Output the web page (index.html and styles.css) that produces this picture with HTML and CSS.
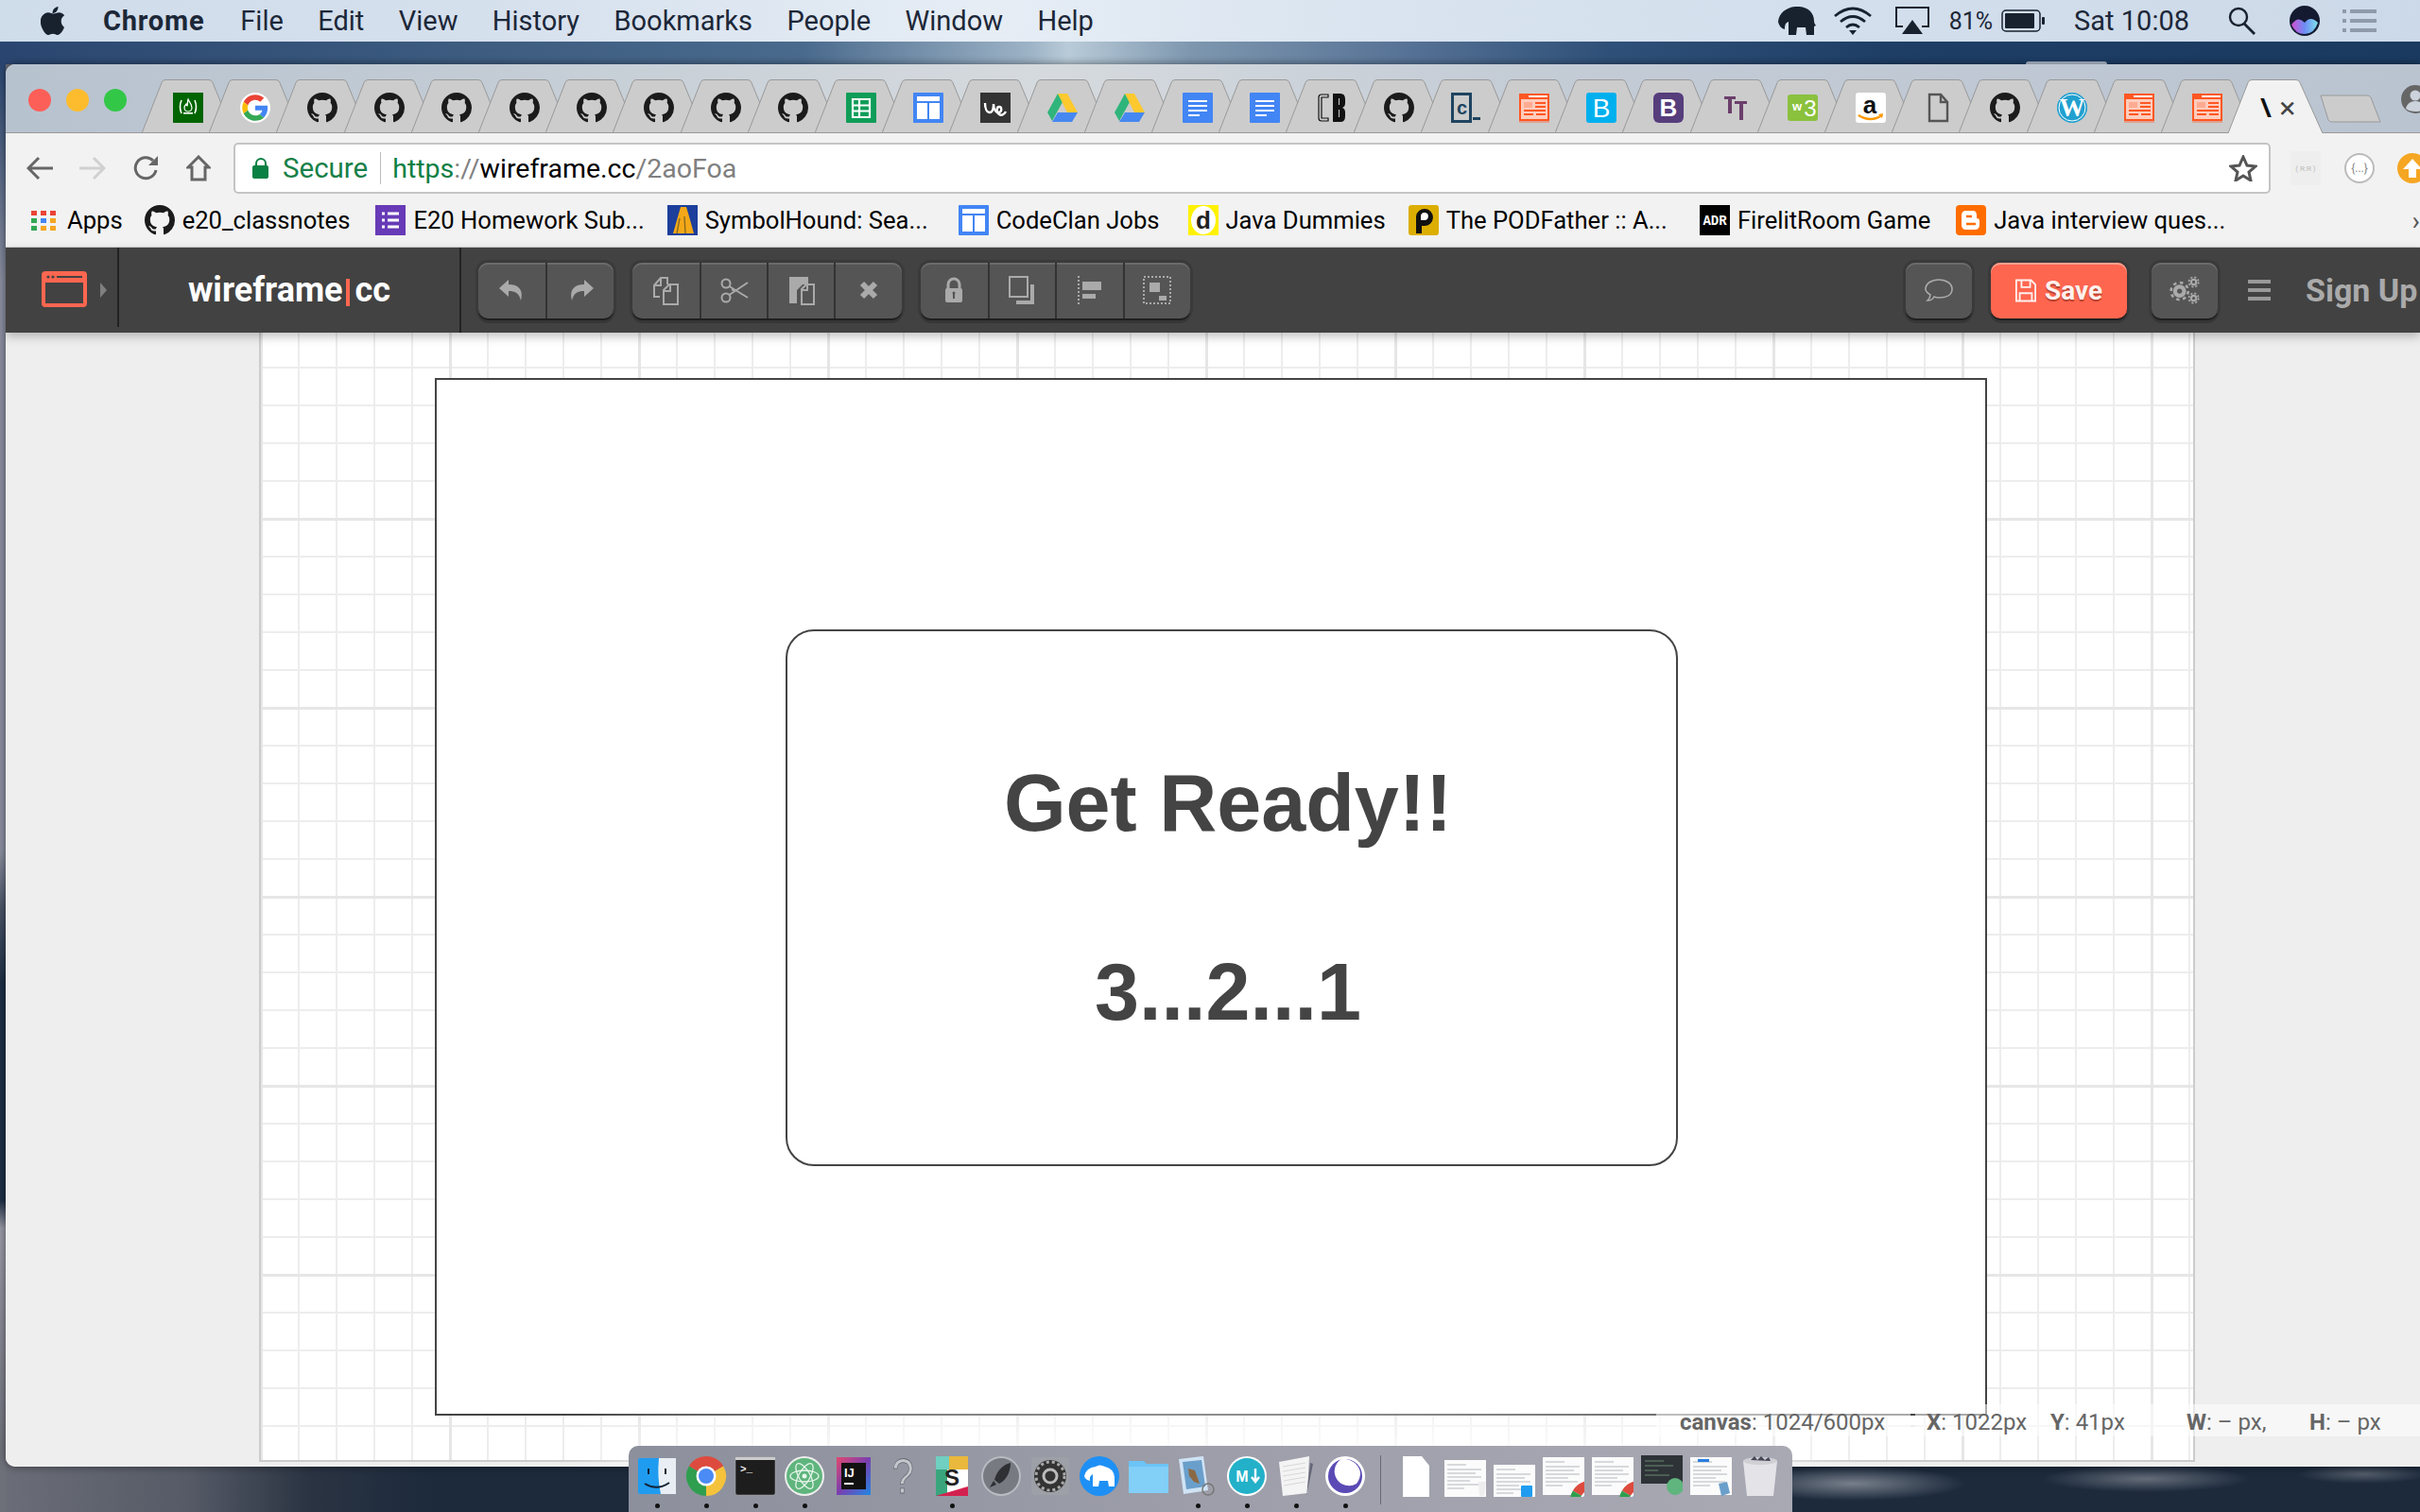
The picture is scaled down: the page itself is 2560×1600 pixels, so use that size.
FILE: index.html
```html
<!DOCTYPE html>
<html lang="en">
<head>
    <meta charset="UTF-8">
    <title>wireframe.cc</title>
    <link rel="stylesheet" href="styles.css">
</head>
<body>
    <!-- shared icons -->
    <svg class="defs">
        <symbol id="gh" viewBox="0 0 16 16"><path fill="#1b1b1b" d="M8 0C3.58 0 0 3.58 0 8c0 3.54 2.29 6.53 5.47 7.59.4.07.55-.17.55-.38 0-.19-.01-.82-.01-1.49-2.01.37-2.53-.49-2.69-.94-.09-.23-.48-.94-.82-1.13-.28-.15-.68-.52-.01-.53.63-.01 1.08.58 1.23.82.72 1.21 1.87.87 2.33.66.07-.52.28-.87.51-1.07-1.78-.2-3.64-.89-3.64-3.95 0-.87.31-1.59.82-2.15-.08-.2-.36-1.02.08-2.12 0 0 .67-.21 2.2.82.64-.18 1.32-.27 2-.27.68 0 1.36.09 2 .27 1.53-1.04 2.2-.82 2.2-.82.44 1.1.16 1.92.08 2.12.51.56.82 1.27.82 2.15 0 3.07-1.87 3.75-3.65 3.95.29.25.54.73.54 1.48 0 1.07-.01 1.93-.01 2.2 0 .21.15.46.55.38A8.013 8.013 0 0016 8c0-4.42-3.58-8-8-8z"/></symbol>
        <symbol id="fcc" viewBox="0 0 32 32"><rect width="32" height="32" fill="#006400"/><path d="M9 8q-3 7 0 14M23 8q3 7 0 14" fill="none" stroke="#fff" stroke-width="1.6"/><path d="M16 7c1 3 4 5 4 9a4 4 0 0 1-8 0c0-2 1-3 2-4 0 1 .5 2 1 2 1-2 0-5 1-7z" fill="none" stroke="#fff" stroke-width="1.2"/><rect x="11" y="21" width="10" height="1.6" fill="#fff"/></symbol>
        <symbol id="google" viewBox="-4 -4 56 56"><circle cx="24" cy="24" r="28" fill="#fff"/><path fill="#EA4335" d="M24 9.5c3.54 0 6.71 1.22 9.21 3.6l6.85-6.85C35.9 2.38 30.47 0 24 0 14.62 0 6.51 5.38 2.56 13.22l7.98 6.19C12.43 13.72 17.74 9.5 24 9.5z"/><path fill="#4285F4" d="M46.98 24.55c0-1.57-.15-3.09-.38-4.55H24v9.02h12.94c-.58 2.96-2.26 5.48-4.78 7.18l7.73 6c4.51-4.18 7.09-10.36 7.09-17.65z"/><path fill="#FBBC05" d="M10.53 28.59c-.48-1.45-.76-2.99-.76-4.59s.27-3.14.76-4.59l-7.98-6.19C.92 16.46 0 20.12 0 24c0 3.88.92 7.54 2.56 10.78l7.97-6.19z"/><path fill="#34A853" d="M24 48c6.48 0 11.93-2.13 15.89-5.81l-7.73-6c-2.15 1.45-4.92 2.3-8.16 2.3-6.26 0-11.57-4.22-13.47-9.91l-7.98 6.19C6.51 42.62 14.62 48 24 48z"/></symbol>
        <symbol id="sheets" viewBox="0 0 32 32"><rect width="32" height="32" rx="1" fill="#0f9d58"/><path d="M7 7h18v19H7zM7 13.5h18M7 19.5h18M14 7v19" fill="none" stroke="#fff" stroke-width="2.2"/></symbol>
        <symbol id="table" viewBox="0 0 32 32"><rect width="32" height="32" rx="1" fill="#4285f4"/><path fill="#fff" d="M4 4h24v5H4zM4 11h11v17H4zM17 11h11v17H17z"/></symbol>
        <symbol id="weebly" viewBox="0 0 32 32"><rect width="32" height="32" fill="#333"/><path d="M5 11c0 6 2 10 5 10s4-5 4-9c0 6 3 10 6 9s3-6 0-6-3 6 0 8 6-1 7-3" fill="none" stroke="#fff" stroke-width="2.4"/></symbol>
        <symbol id="drive" viewBox="0 0 32 32"><path fill="#2fb57b" d="M11 1 0 21l5 9L16 10z"/><path fill="#fdc92f" d="M11 1h10l11 20H21z"/><path fill="#4688f1" d="M5 31h21l6-10H11z"/></symbol>
        <symbol id="docs" viewBox="0 0 32 32"><rect width="32" height="32" rx="1" fill="#4285f4"/><path d="M6 9h20M6 14h20M6 19h20M6 24h12" stroke="#fff" stroke-width="2.2"/></symbol>
        <symbol id="cb" viewBox="0 0 32 32"><path d="M12 2H5Q2 2 2 5v22q0 3 3 3h7v-3H5V5h7z" fill="none" stroke="#111" stroke-width="1.2"/><path fill="#111" d="M17 1h8q5 0 5 6v4q0 4-3 5 3 1 3 5v4q0 6-5 6h-8zm6 5v7h1V6zm0 12v8h1v-8z"/></symbol>
        <symbol id="cprompt" viewBox="0 0 32 32"><rect x="1.5" y="1.5" width="19" height="29" fill="none" stroke="#1f4460" stroke-width="3"/><text x="6" y="23" class="t-fav" font-size="20" fill="#1f4460">c</text><rect x="23" y="26" width="8" height="3" fill="#1f4460"/></symbol>
        <symbol id="orange" viewBox="0 0 32 32"><rect y="1" width="32" height="29" fill="#ff5722"/><rect x="2" y="7" width="28" height="21" fill="#ffccbc"/><path d="M5 10h9v6H5z" fill="#ffab91"/><path d="M17 11h11M17 15h11M5 19h23M5 23h10M18 23h10" stroke="#ff5722" stroke-width="2" fill="none"/><rect y="30" width="32" height="2" fill="#e0a090"/><path d="M10 4h20" stroke="#fff" stroke-width="2"/></symbol>
        <symbol id="bcyan" viewBox="0 0 32 32"><rect width="32" height="32" rx="3" fill="#00b0ee"/><text x="16" y="26" text-anchor="middle" class="t-fav-thin" font-size="28" fill="#fff">B</text></symbol>
        <symbol id="bpurple" viewBox="0 0 32 32"><rect width="32" height="32" rx="6" fill="#563d7c"/><text x="16" y="25" text-anchor="middle" class="t-fav" font-size="26" fill="#fff">B</text></symbol>
        <symbol id="tt" viewBox="0 0 32 32"><path fill="#6b3f6b" d="M4 4h12v3h-4v15H8V7H4zM15 9h13v3h-4v17h-4V12h-5z"/></symbol>
        <symbol id="w3" viewBox="0 0 32 32"><rect y="2" width="32" height="28" rx="3" fill="#8ac13d"/><text x="10" y="19" text-anchor="middle" class="t-fav" font-size="13" fill="#fff">w</text><text x="24" y="25" text-anchor="middle" class="t-fav-thin" font-size="24" fill="#fff">3</text></symbol>
        <symbol id="amazon" viewBox="0 0 32 32"><rect width="32" height="32" rx="3" fill="#fff"/><text x="15" y="22" text-anchor="middle" class="t-fav" font-size="26" fill="#111">a</text><path d="M3 24q13 8 25 0" fill="none" stroke="#f90" stroke-width="2.6"/><path d="M24 23l5-1-1 5z" fill="#f90"/></symbol>
        <symbol id="page" viewBox="0 0 32 32"><path d="M7 2h12l7 8v20H7zM19 2v8h7" fill="none" stroke="#555" stroke-width="2.4"/></symbol>
        <symbol id="wp" viewBox="0 0 32 32"><circle cx="16" cy="16" r="16" fill="#21a0cf"/><circle cx="16" cy="16" r="14" fill="none" stroke="#fff" stroke-width="1"/><text x="16" y="25" text-anchor="middle" class="t-serif" font-size="27" fill="#fff">W</text></symbol>
        <symbol id="form" viewBox="0 0 32 32"><rect width="32" height="32" fill="#673ab7"/><path d="M7 9h3M13 9h12M7 16h3M13 16h12M7 23h3M13 23h12" stroke="#fff" stroke-width="3.2"/></symbol>
        <symbol id="hound" viewBox="0 0 32 32"><rect width="32" height="32" fill="#1c3f9c"/><path fill="#f4a817" d="M14 2h6l3 10 5 18H6l4-14z"/><path d="M13 14l-3 16M18 12l1 18" stroke="#8a6a20" stroke-width="1.4"/></symbol>
        <symbol id="dummy" viewBox="0 0 32 32"><rect width="32" height="32" fill="#fff200"/><ellipse cx="16" cy="16" rx="13" ry="15" fill="#fff"/><text x="16" y="25" text-anchor="middle" class="t-fav" font-size="26" fill="#222">d</text></symbol>
        <symbol id="pod" viewBox="0 0 32 32"><rect width="32" height="32" rx="3" fill="#dcae00"/><path d="M8 30V12a9 9 0 1 1 9 10h-3v8z" fill="#111"/><path d="M13 16v-5a4 4 0 1 1 4 5z" fill="#fff"/></symbol>
        <symbol id="adr" viewBox="0 0 32 32"><rect width="32" height="32" fill="#000"/><text x="16" y="21" text-anchor="middle" class="t-mono" font-size="14" fill="#fff">ADR</text></symbol>
        <symbol id="blogger" viewBox="0 0 32 32"><rect width="32" height="32" rx="4" fill="#ff6d00"/><path d="M11 6h7q4 0 4 5v3q3 0 3 3v4q0 5-5 5h-9q-5 0-5-5V11q0-5 5-5z" fill="#fff"/><path d="M11 12h6M11 20h10" stroke="#ff6d00" stroke-width="2.4"/></symbol>
        <symbol id="chrome" viewBox="0 0 44 44"><path fill="#dd4b3e" d="M22 22 3.8 11.5A21 21 0 0 1 40.2 11.5z"/><path fill="#f5c33b" d="M22 22 40.2 11.5A21 21 0 0 1 22 43z"/><path fill="#2f9e4f" d="M22 22 22 43A21 21 0 0 1 3.8 11.5z"/><circle cx="22" cy="22" r="10.5" fill="#fff"/><circle cx="22" cy="22" r="8" fill="#4a8bf5"/></symbol>
        <symbol id="thumb" viewBox="0 0 44 40"><rect width="44" height="40" fill="#fbfbfb"/><path d="M3 5h20M3 10h36M3 14h30M3 18h36M3 22h24M3 26h34M3 30h18" stroke="#b4b8be" stroke-width="1.2"/></symbol>
    </svg>

    <!-- mac menu bar -->
    <header class="menubar">
        <svg class="apple" viewBox="0 0 26 30"><path fill="#18222f" d="M18.5 0c.2 2-.6 3.700-1.600 5-1 1.200-2.700 2.200-4.300 2-.2-1.800.7-3.600 1.600-4.700C15.300 1 17.100.1 18.500 0zM25 22c-.8 1.700-1.100 2.400-2.100 3.900-1.400 2.100-3.300 4-5.300 4-1.800 0-2.300-1.200-4.600-1.200s-3 1.200-4.800 1.200c-2 0-3.600-1.900-5-4C-.7 20.200-1.100 13.500 1.500 10 3.200 7.500 5.700 6.200 8 6.200c2.400 0 3.900 1.300 5.800 1.300 1.900 0 3-1.300 5.700-1.300 2.100 0 4.200 1.100 5.700 3-5 2.800-4.200 9.900-.2 12.800z"/></svg>
        <nav class="menu-items">
            <span class="menu-app">Chrome</span>
            <span>File</span>
            <span>Edit</span>
            <span>View</span>
            <span>History</span>
            <span>Bookmarks</span>
            <span>People</span>
            <span>Window</span>
            <span>Help</span>
        </nav>
        <div class="menu-status">
            <svg class="st-elephant" viewBox="0 0 40 30"><path fill="#18222f" d="M0 16C1 7 8 1 18 0c11-1 20 5 20 15 0 2 1 4 2 5l-2 1v9h-8l-1-8H20l-1 8h-8V16c-3 1-4 3-4 8-4-1-6-4-7-8z"/></svg>
            <svg class="st-wifi" viewBox="0 0 42 32"><path d="M2 11q19-16 38 0M8 17q13-11 26 0M14 23q7-6 14 0" fill="none" stroke="#18222f" stroke-width="2.800"/><path d="M17 26h8l-4 5z" fill="#18222f"/></svg>
            <svg class="st-airplay" viewBox="0 0 36 30"><path d="M8 21H1V1h34v20h-7" fill="none" stroke="#18222f" stroke-width="2"/><path d="M18 14l11 15H7z" fill="#18222f"/></svg>
            <span class="st-batt-text">81%</span>
            <svg class="st-battery" viewBox="0 0 46 24"><rect x="1" y="1" width="40" height="22" rx="4" fill="none" stroke="#18222f" stroke-width="1.500"/><rect x="4" y="4" width="31" height="16" rx="1" fill="#18222f"/><rect x="43" y="8" width="3" height="8" rx="1" fill="#18222f"/></svg>
            <span class="st-clock">Sat 10:08</span>
            <svg class="st-search" viewBox="0 0 30 30"><circle cx="11" cy="11" r="9" fill="none" stroke="#18222f" stroke-width="2.400"/><path d="M17 18l11 11" stroke="#18222f" stroke-width="2.800"/></svg>
            <svg class="st-siri" viewBox="0 0 32 32"><defs><linearGradient id="siri-g" x1="0" x2="1"><stop offset="0" stop-color="#d14fd0"/><stop offset=".5" stop-color="#6d8cf5"/><stop offset="1" stop-color="#7fe0ea"/></linearGradient></defs><circle cx="16" cy="16" r="16" fill="#141a30"/><path d="M2 20q7-10 14-2 6-8 14 0-4 12-14 12T2 20z" fill="url(#siri-g)"/></svg>
            <svg class="st-list" viewBox="0 0 36 26"><path d="M0 3h4M8 3h28M0 13h4M8 13h28M0 23h4M8 23h28" stroke="#8f9bab" stroke-width="4"/></svg>
        </div>
    </header>

    <div class="window-behind"></div>

    <main class="window">
        <!-- tab strip -->
        <div class="tabstrip">
            <div class="traffic">
                <span class="light light-red"></span>
                <span class="light light-yellow"></span>
                <span class="light light-green"></span>
            </div>
            <div class="tabs">
                <div class="tab tab-active"><span class="tab-title">\</span><span class="tab-close">×</span></div>
                <div class="tab"><svg class="fav"><use href="#orange"/></svg></div>
                <div class="tab"><svg class="fav"><use href="#orange"/></svg></div>
                <div class="tab"><svg class="fav"><use href="#wp"/></svg></div>
                <div class="tab"><svg class="fav"><use href="#gh"/></svg></div>
                <div class="tab"><svg class="fav"><use href="#page"/></svg></div>
                <div class="tab"><svg class="fav"><use href="#amazon"/></svg></div>
                <div class="tab"><svg class="fav"><use href="#w3"/></svg></div>
                <div class="tab"><svg class="fav"><use href="#tt"/></svg></div>
                <div class="tab"><svg class="fav"><use href="#bpurple"/></svg></div>
                <div class="tab"><svg class="fav"><use href="#bcyan"/></svg></div>
                <div class="tab"><svg class="fav"><use href="#orange"/></svg></div>
                <div class="tab"><svg class="fav"><use href="#cprompt"/></svg></div>
                <div class="tab"><svg class="fav"><use href="#gh"/></svg></div>
                <div class="tab"><svg class="fav"><use href="#cb"/></svg></div>
                <div class="tab"><svg class="fav"><use href="#docs"/></svg></div>
                <div class="tab"><svg class="fav"><use href="#docs"/></svg></div>
                <div class="tab"><svg class="fav"><use href="#drive"/></svg></div>
                <div class="tab"><svg class="fav"><use href="#drive"/></svg></div>
                <div class="tab"><svg class="fav"><use href="#weebly"/></svg></div>
                <div class="tab"><svg class="fav"><use href="#table"/></svg></div>
                <div class="tab"><svg class="fav"><use href="#sheets"/></svg></div>
                <div class="tab"><svg class="fav"><use href="#gh"/></svg></div>
                <div class="tab"><svg class="fav"><use href="#gh"/></svg></div>
                <div class="tab"><svg class="fav"><use href="#gh"/></svg></div>
                <div class="tab"><svg class="fav"><use href="#gh"/></svg></div>
                <div class="tab"><svg class="fav"><use href="#gh"/></svg></div>
                <div class="tab"><svg class="fav"><use href="#gh"/></svg></div>
                <div class="tab"><svg class="fav"><use href="#gh"/></svg></div>
                <div class="tab"><svg class="fav"><use href="#gh"/></svg></div>
                <div class="tab"><svg class="fav"><use href="#google"/></svg></div>
                <div class="tab"><svg class="fav"><use href="#fcc"/></svg></div>
            </div>
            <div class="newtab"></div>
            <svg class="profile" viewBox="0 0 30 30"><circle cx="15" cy="15" r="15" fill="#666"/><circle cx="15" cy="11" r="5.500" fill="#ccd3dc"/><path d="M5 25q2-8 10-8t10 8q-4 3-10 3t-10-3z" fill="#ccd3dc"/></svg>
        </div>

        <!-- address row -->
        <div class="addressbar">
            <svg class="nav-icon nav-back" viewBox="0 0 28 26"><path d="M13 2 2 13l11 11M2 13h26" fill="none" stroke="#666" stroke-width="3"/></svg>
            <svg class="nav-icon nav-forward" viewBox="0 0 28 26"><path d="M15 2l11 11-11 11M26 13H0" fill="none" stroke="#d0d0d0" stroke-width="3"/></svg>
            <svg class="nav-icon nav-reload" viewBox="0 0 28 28"><path d="M24 16a11 11 0 1 1-3-10" fill="none" stroke="#666" stroke-width="3"/><path d="M26 1v10H16z" fill="#666"/></svg>
            <svg class="nav-icon nav-home" viewBox="0 0 26 28"><path d="M13 2 2 13h4v13h14V13h4z" fill="none" stroke="#666" stroke-width="3"/></svg>
            <div class="omnibox">
                <svg class="lock" viewBox="0 0 18 22"><path d="M4 9V6a5 5 0 0 1 10 0v3" fill="none" stroke="#0b8043" stroke-width="2"/><rect y="8" width="17" height="14" rx="2" fill="#0b8043"/></svg>
                <span class="secure">Secure</span>
                <span class="url"><span class="url-https">https</span><span class="url-dim">://</span><span class="url-host">wireframe.cc</span><span class="url-dim">/2aoFoa</span></span>
                <svg class="star" viewBox="0 0 30 28"><path d="M15 2l4 9 9 1-7 6 2 9-8-5-8 5 2-9-7-6 9-1z" fill="none" stroke="#555" stroke-width="3"/></svg>
            </div>
            <div class="extensions">
                <span class="ext-rr">( R:R )</span>
                <span class="ext-json">{...}</span>
                <svg class="ext-up" viewBox="0 0 32 32"><circle cx="16" cy="16" r="16" fill="#f5a623"/><path d="M16 6l10 11h-6v9h-8v-9H6z" fill="#fff"/></svg>
            </div>
        </div>

        <!-- bookmarks -->
        <div class="bookmarks">
            <a class="bookmark bm-apps"><svg class="bm-icon bm-grid" viewBox="0 0 27 21"><path fill="#ea4335" d="M0 0h6v5H0zM10 0h6v5h-6zM20 0h6v5h-6z"/><path fill="#34a853" d="M0 8h6v5H0z"/><path fill="#4285f4" d="M10 8h6v5h-6z"/><path fill="#f5a623" d="M20 8h6v5h-6zM10 16h6v5h-6zM20 16h6v5h-6z"/><path fill="#34a853" d="M0 16h6v5H0z"/></svg>Apps</a>
            <a class="bookmark"><svg class="bm-icon"><use href="#gh"/></svg>e20_classnotes</a>
            <a class="bookmark"><svg class="bm-icon"><use href="#form"/></svg>E20 Homework Sub...</a>
            <a class="bookmark"><svg class="bm-icon"><use href="#hound"/></svg>SymbolHound: Sea...</a>
            <a class="bookmark"><svg class="bm-icon"><use href="#table"/></svg>CodeClan Jobs</a>
            <a class="bookmark"><svg class="bm-icon"><use href="#dummy"/></svg>Java Dummies</a>
            <a class="bookmark"><svg class="bm-icon"><use href="#pod"/></svg>The PODFather :: A...</a>
            <a class="bookmark"><svg class="bm-icon"><use href="#adr"/></svg>FirelitRoom Game</a>
            <a class="bookmark"><svg class="bm-icon"><use href="#blogger"/></svg>Java interview ques...</a>
            <span class="bm-more">›</span>
        </div>

        <!-- wireframe.cc toolbar -->
        <div class="toolbar">
            <div class="tb-logo">
                <svg class="logo-icon" viewBox="0 0 48 38"><rect x="2" y="2" width="44" height="34" rx="2" fill="none" stroke="#ff6650" stroke-width="4"/><path fill="#ff6650" d="M2 2h44v10H2z"/><circle cx="7" cy="6" r="1.600" fill="#424242"/><circle cx="12" cy="6" r="1.600" fill="#424242"/><rect x="16" y="5" width="27" height="2" fill="#424242"/></svg>
                <span class="logo-caret"></span>
            </div>
            <div class="tb-brand">wireframe<span class="brand-bar"></span>cc</div>
            <div class="btn-group btn-group-history">
                <button class="btn"><svg viewBox="0 0 32 32"><path d="M12 5 2 14l10 9v-6c7 0 11 2 13 10 3-11-2-17-13-17z" fill="#aaa"/></svg></button>
                <button class="btn"><svg viewBox="0 0 32 32"><path d="M20 5l10 9-10 9v-6c-7 0-11 2-13 10-3-11 2-17 13-17z" fill="#aaa"/></svg></button>
            </div>
            <div class="btn-group">
                <button class="btn"><svg viewBox="0 0 32 32"><path d="M10 23H4V11l7-8h7v7M5 11h6V3" fill="none" stroke="#aaa" stroke-width="2"/><path d="M14 31V16l6-6h9v21zM14 17h7v-7" fill="#555" stroke="#aaa" stroke-width="2"/></svg></button>
                <button class="btn"><svg viewBox="0 0 32 32"><g fill="none" stroke="#aaa" stroke-width="2"><circle cx="7" cy="9" r="4.500"/><circle cx="7" cy="24" r="4.500"/><path d="M10.500 12 30 24M10.500 21 30 8M13 15l4 2"/></g></svg></button>
                <button class="btn"><svg viewBox="0 0 32 32"><path d="M3 2h20v8h-6l-6 6v14H3z" fill="#aaa"/><path d="M16 31V15l5-5h8v21zM16 16h6v-6" fill="#555" stroke="#aaa" stroke-width="2"/></svg></button>
                <button class="btn"><svg viewBox="0 0 32 32"><path d="M9 9l14 14M23 9 9 23" stroke="#aaa" stroke-width="6"/></svg></button>
            </div>
            <div class="btn-group">
                <button class="btn"><svg viewBox="0 0 32 32"><path d="M10 15V10a6 6 0 0 1 12 0v5" fill="none" stroke="#aaa" stroke-width="3"/><rect x="7" y="14" width="18" height="15" rx="2" fill="#aaa"/><path d="M16 18v7" stroke="#555" stroke-width="2"/><circle cx="16" cy="19" r="1.500" fill="#555"/></svg></button>
                <button class="btn"><svg viewBox="0 0 32 32"><rect x="2" y="2" width="19" height="21" fill="none" stroke="#aaa" stroke-width="2"/><path fill="#aaa" d="M24 10h4v21H9v-4h15z"/></svg></button>
                <button class="btn"><svg viewBox="0 0 32 32"><path d="M4 1v30" stroke="#aaa" stroke-width="2" stroke-dasharray="2 2"/><path fill="#aaa" d="M8 7h20v9H8zM8 20h14v5H8z"/></svg></button>
                <button class="btn"><svg viewBox="0 0 32 32"><rect x="2" y="2" width="28" height="28" fill="none" stroke="#aaa" stroke-width="2" stroke-dasharray="2 2"/><path fill="#aaa" d="M8 8h11v10H8zM18 22h8v5h-8z"/></svg></button>
            </div>
            <div class="tb-right">
                <button class="btn btn-single"><svg viewBox="0 0 32 32"><path d="M16 5c8 0 14 4 14 10s-6 9-14 9c-2 0-3 0-5-1-1 2-4 4-7 4 2-2 3-4 3-6-3-2-5-4-5-6C2 9 8 5 16 5z" fill="none" stroke="#aaa" stroke-width="1.600"/></svg></button>
                <button class="btn btn-save"><svg viewBox="0 0 24 26"><path d="M1 1h17l5 5v19H1zM7 1v8h10V1M5 25v-9h14v9" fill="none" stroke="#fff1ee" stroke-width="2"/></svg>Save</button>
                <button class="btn btn-single"><svg viewBox="0 0 30 28"><g fill="none" stroke="#aaa"><circle cx="10" cy="15" r="4.500" stroke-width="4"/><circle cx="10" cy="15" r="8.500" stroke-width="2.400" stroke-dasharray="3.300 3.370"/><circle cx="24" cy="6" r="2.500" stroke-width="2"/><circle cx="24" cy="6" r="4.800" stroke-width="1.600" stroke-dasharray="2 1.770"/><circle cx="24" cy="22" r="2.500" stroke-width="2"/><circle cx="24" cy="22" r="4.800" stroke-width="1.600" stroke-dasharray="2 1.770"/></g></svg></button>
                <div class="hamburger"><span></span><span></span><span></span></div>
                <span class="signup">Sign Up</span>
            </div>
        </div>

        <!-- drawing area -->
        <div class="workspace">
            <div class="gridsheet">
                <div class="artboard">
                    <div class="rounded-box">
                        <div class="box-line">Get Ready!!</div>
                        <div class="box-line">3...2...1</div>
                    </div>
                </div>
            </div>
            <div class="dock-glow"></div>
        </div>
    </main>

    <!-- coordinates readout, floats over the page -->
    <div class="statusbar">
        <div class="status-part status-canvas"><b>canvas</b>: 1024/600px</div>
        <div class="status-part status-coords">
            <span class="st-x"><b>X</b>: 1022px</span>
            <span class="st-y"><b>Y</b>: 41px</span>
            <span class="st-w"><b>W</b>: – px,</span>
            <span class="st-h"><b>H</b>: – px</span>
        </div>
    </div>

    <!-- dock -->
    <footer class="dock">
        <div class="dock-item on"><svg viewBox="0 0 44 44"><rect x="2" y="3" width="40" height="38" rx="2" fill="#1f9cf0"/><path d="M24 3h18v38H26q-4-18-2-38z" fill="#e8eef4"/><path d="M13 14v6M31 14v6M9 30q13 8 26-1" fill="none" stroke="#123" stroke-width="2"/></svg></div>
        <div class="dock-item on"><svg viewBox="0 0 44 44"><use href="#chrome"/></svg></div>
        <div class="dock-item on"><svg viewBox="0 0 44 44"><rect x="1" y="2" width="42" height="40" rx="2" fill="#1d1d1d" stroke="#aaa" stroke-width=".5"/><rect x="1" y="2" width="42" height="3" fill="#ccc"/><text x="6" y="18" class="t-mono" font-size="11" fill="#eee">&gt;_</text></svg></div>
        <div class="dock-item on"><svg viewBox="0 0 44 44"><circle cx="22" cy="22" r="21" fill="#eee"/><circle cx="22" cy="22" r="19" fill="#5fb57d"/><g fill="none" stroke="#e8f6ec" stroke-width="1.300"><ellipse cx="22" cy="22" rx="15" ry="6"/><ellipse cx="22" cy="22" rx="15" ry="6" transform="rotate(60 22 22)"/><ellipse cx="22" cy="22" rx="15" ry="6" transform="rotate(120 22 22)"/></g><circle cx="22" cy="22" r="2.500" fill="#e8f6ec"/></svg></div>
        <div class="dock-item"><svg viewBox="0 0 44 44"><defs><linearGradient id="ij-g" x1="0" y1="0" x2="1" y2="1"><stop offset="0" stop-color="#e3486e"/><stop offset=".5" stop-color="#7a3fb0"/><stop offset="1" stop-color="#1e88e5"/></linearGradient></defs><rect x="4" y="2" width="36" height="40" fill="url(#ij-g)"/><rect x="9" y="8" width="26" height="28" fill="#111"/><text x="12" y="23" class="t-fav" font-size="13" fill="#fff">IJ</text><rect x="12" y="29" width="10" height="2" fill="#fff"/></svg></div>
        <div class="dock-item dock-help">?</div>
        <div class="dock-item on"><svg viewBox="0 0 44 44"><path d="M5 1h34v42H5z" fill="#fff"/><path d="M5 1h14v14H5z" fill="#6fcfc0"/><path d="M19 1h20v14H19z" fill="#eab83c"/><path d="M5 15h12v28H5z" fill="#3aa57d"/><path d="M5 43l34-10v10z" fill="#d3214f"/><text x="22" y="32" text-anchor="middle" class="t-fav" font-size="24" fill="#222">S</text></svg></div>
        <div class="dock-item"><svg viewBox="0 0 44 44"><circle cx="22" cy="22" r="21" fill="#b9bcc2"/><circle cx="22" cy="22" r="19" fill="#777a80"/><path d="M32 8c-9 2-15 10-17 18l5 4c7-3 12-12 12-22zM14 27l-4 7 7-3z" fill="#2e3034"/></svg></div>
        <div class="dock-item"><svg viewBox="0 0 44 44"><rect x="2" y="2" width="40" height="40" rx="3" fill="#9da0a6"/><circle cx="22" cy="22" r="17" fill="#333"/><circle cx="22" cy="22" r="15" fill="none" stroke="#aaa" stroke-width="3" stroke-dasharray="3 3"/><circle cx="22" cy="22" r="7" fill="none" stroke="#bbb" stroke-width="3"/></svg></div>
        <div class="dock-item"><svg viewBox="0 0 44 44"><circle cx="22" cy="22" r="21" fill="#1e90f5"/><path d="M6 22q2-9 12-10 4-3 10 0 9 2 10 11v10h-6l-1-6h-9l-1 6h-6V20q-4 2-3 7-5-1-6-5z" fill="#fff"/></svg></div>
        <div class="dock-item"><svg viewBox="0 0 44 44"><path d="M1 6h16l3 3h23v31H1z" fill="#6cc3f5"/><rect x="1" y="12" width="42" height="28" fill="#82cff8"/></svg></div>
        <div class="dock-item on"><svg viewBox="0 0 44 44"><path d="M2 4 28 1l5 36-26 4z" fill="#cfe3f5"/><path d="M6 7 26 5l4 28-20 3z" fill="#6a9fcb"/><path d="M12 14l7 2 5 14-6-2-5-6z" fill="#8a6a44"/><circle cx="33" cy="36" r="6" fill="none" stroke="#777" stroke-width="1.500"/></svg></div>
        <div class="dock-item on"><svg viewBox="0 0 44 44"><circle cx="22" cy="22" r="21" fill="#fff"/><circle cx="22" cy="22" r="19" fill="#23b0c9"/><text x="17" y="28" text-anchor="middle" class="t-fav" font-size="16" fill="#fff">M</text><path d="M31 14v13M27 23l4 5 4-5" fill="none" stroke="#fff" stroke-width="2.400"/></svg></div>
        <div class="dock-item on"><svg viewBox="0 0 44 44"><path d="M4 7 36 1l-2 39-26 3z" fill="#f4f4f4"/><path d="M8 12l24-4M8 17l24-4M8 22l24-4M9 27l23-4M9 32l23-4" stroke="#d8d8d8"/><path d="M37 8l3 1-7 34z" fill="#667"/></svg></div>
        <div class="dock-item on"><svg viewBox="0 0 44 44"><circle cx="22" cy="22" r="21" fill="#fff"/><circle cx="22" cy="22" r="18" fill="#5a4ab5"/><path d="M18 4a15 15 0 0 0 16 26 18 18 0 0 0 4-12 18 18 0 0 0-20-14z" fill="#fff"/></svg></div>
        <span class="dock-sep"></span>
        <div class="dock-item"><svg viewBox="0 0 44 44"><path d="M8 1h20l8 10v33H8z" fill="#fff"/></svg></div>
        <div class="dock-item"><svg viewBox="0 0 44 44"><svg width="44" height="36" y="3" viewBox="0 0 44 40"><use href="#thumb"/></svg><path d="M36 28h8l-2 15h-5z" fill="#eee"/></svg></div>
        <div class="dock-item"><svg viewBox="0 0 44 44"><svg width="44" height="30" y="8" viewBox="0 0 44 40"><use href="#thumb"/></svg><rect x="29" y="32" width="12" height="12" rx="1" fill="#1f9cf0"/></svg></div>
        <div class="dock-item"><svg viewBox="0 0 44 44"><svg width="44" height="32" y="0" viewBox="0 0 44 40"><use href="#thumb"/></svg><svg x="28" y="26" width="18" height="18" viewBox="0 0 44 44"><use href="#chrome"/></svg></svg></div>
        <div class="dock-item"><svg viewBox="0 0 44 44"><svg width="44" height="32" y="0" viewBox="0 0 44 40"><use href="#thumb"/></svg><svg x="28" y="26" width="18" height="18" viewBox="0 0 44 44"><use href="#chrome"/></svg></svg></div>
        <div class="dock-item"><svg viewBox="0 0 44 44"><rect y="0" width="44" height="30" fill="#2e3338"/><path d="M4 6h20M4 11h30M4 16h14M4 21h26" stroke="#6a8a70"/><circle cx="36" cy="33" r="9" fill="#5fb57d"/></svg></div>
        <div class="dock-item"><svg viewBox="0 0 44 44"><svg width="44" height="32" y="0" viewBox="0 0 44 40"><use href="#thumb"/></svg><rect x="8" y="4" width="12" height="3" fill="#2a7de1"/><path d="M30 30l9-2 3 12-9 3z" fill="#6a9fcb"/></svg></div>
        <div class="dock-item"><svg viewBox="0 0 44 44"><path d="M4 6h36l-4 37H8z" fill="#e4e4e8"/><ellipse cx="22" cy="6" rx="18" ry="4" fill="#cfcfd4"/><path d="M12 5l4-4 3 4 4-4 4 4 4-3 2 4z" fill="#445"/></svg></div>
    </footer>
</body>
</html>
```

FILE: styles.css
```css
* {
    margin: 0;
    padding: 0;
    box-sizing: border-box;
}

body {
    position: relative;
    width: 2560px;
    height: 1600px;
    overflow: hidden;
    font-family: Roboto, "Liberation Sans", sans-serif;
    background:
        radial-gradient(ellipse 120px 18px at 1960px 1570px, rgba(150, 155, 165, .75), transparent),
        radial-gradient(ellipse 110px 14px at 2270px 1565px, rgba(130, 135, 145, .7), transparent),
        radial-gradient(ellipse 70px 10px at 2500px 1560px, rgba(120, 125, 135, .6), transparent),
        linear-gradient(90deg, #2a4670 0, #3d5c80 500px, #4a6a8d 850px, #9db3c6 1090px, #b9cbd8 1130px, #7e97af 1260px, #547094 1500px, #2f5078 1700px, #1e3e66 2000px, #1a3a60 2560px) top / 100% 68px no-repeat,
        linear-gradient(180deg, #2a4670 68px, #8b8fa0 300px, #8b8fa0 900px, #4a5568 960px, #1e2f46 1040px, #1e2f46 1270px, #9a9aa8 1300px, #6e7079 1552px) left / 6px 100% no-repeat,
        linear-gradient(90deg, #6b6e78 0, #555a66 200px, #2a3342 330px, #1c2a3c 460px, #1c2a3c 2560px);
}

.defs {
    display: none;
}

.t-fav { font-family: "Liberation Sans", sans-serif; font-weight: 700; }
.t-fav-thin { font-family: "Liberation Sans", sans-serif; }
.t-serif { font-family: "Liberation Serif", serif; font-weight: 700; }
.t-mono { font-family: "Liberation Mono", monospace; font-weight: 700; }

/* mac menu bar */
.menubar {
    display: flex;
    align-items: center;
    height: 44px;
    padding-left: 43px;
    font-size: 29px;
    color: #1c2738;
    background: linear-gradient(90deg, #cfdcea 0, #d5e0ed 500px, #e6edf5 1050px, #d8e3ef 1500px, #ccd9e8 2560px);
}

.apple {
    width: 26px;
    height: 30px;
}

.menu-items {
    display: flex;
    gap: 36.400px;
    margin-left: 40px;
}

.menu-app {
    margin-right: 1.600px;
    font-weight: 700;
    letter-spacing: .8px;
}

.menu-status {
    display: flex;
    align-items: center;
    margin-left: auto;
    padding-right: 46px;
}

.st-elephant { width: 40px; height: 30px; }
.st-wifi { width: 42px; height: 32px; margin-left: 18px; }
.st-airplay { width: 36px; height: 30px; margin-left: 24px; }
.st-batt-text { font-size: 25px; margin-left: 21px; }
.st-battery { width: 46px; height: 24px; margin-left: 9px; }
.st-clock { margin-left: 31px; }
.st-search { width: 30px; height: 30px; margin-left: 41px; }
.st-siri { width: 32px; height: 32px; margin-left: 35px; }
.st-list { width: 36px; height: 26px; margin-left: 24px; }

.window-behind {
    position: absolute;
    top: 65px;
    left: 2143px;
    width: 86px;
    height: 3px;
    border-radius: 3px 3px 0 0;
    background: #8f9aa8;
}

/* browser window */
.window {
    display: flex;
    flex-direction: column;
    width: 2554px;
    height: 1484px;
    margin: 24px 0 0 6px;
    border-radius: 10px 0 0 10px;
    overflow: hidden;
    background: #f2f2f2;
    box-shadow: 0 0 8px rgba(0, 0, 0, .5);
}

.tabstrip {
    display: flex;
    align-items: flex-end;
    flex: none;
    height: 73px;
    border-bottom: 1px solid #9a9a9a;
    background: linear-gradient(90deg, #b7c2cf 0, #c3ccd5 500px, #d5dade 1100px, #c4ccd6 1600px, #bac4d1 2554px);
}

.traffic {
    display: flex;
    flex: none;
    gap: 16px;
    align-self: flex-start;
    width: 144px;
    padding: 26px 0 0 24px;
}

.light {
    width: 24px;
    height: 24px;
    border-radius: 50%;
}

.light-red { background: #fc5f57; }
.light-yellow { background: #fdbc2e; }
.light-green { background: #33c748; }

.tabs {
    display: flex;
    flex-direction: row-reverse;
    justify-content: flex-end;
    flex: none;
    margin-bottom: -1px;
}

.tab {
    display: flex;
    align-items: center;
    justify-content: center;
    flex: none;
    width: 97px;
    height: 57px;
    padding-top: 3px;
    background: url("data:image/svg+xml,%3Csvg xmlns='http://www.w3.org/2000/svg' width='97' height='57'%3E%3Cpath d='M0 57 21 3.500Q22 .5 25 .5H71Q74 .5 75 3.500L97 57' fill='%23ccc' stroke='%23999'/%3E%3Cpath d='M0 56.500H97' stroke='%23999'/%3E%3C/svg%3E") no-repeat;
}

.tab + .tab {
    margin-right: -25.800px;
}

.tab-active {
    position: relative;
    z-index: 2;
    width: 100px;
    gap: 9px;
    padding-left: 5px;
    color: #333;
    background: url("data:image/svg+xml,%3Csvg xmlns='http://www.w3.org/2000/svg' width='100' height='57'%3E%3Cpath d='M0 57 21 3.500Q22 .5 25 .5H72Q75 .5 76 3.500L100 57' fill='%23f2f2f2' stroke='%23999'/%3E%3C/svg%3E") no-repeat;
}

.tab-title {
    font-size: 26px;
    font-weight: 700;
    color: #111;
}

.tab-close {
    font-size: 32px;
    color: #444;
}

.fav {
    width: 32px;
    height: 32px;
}

.newtab {
    flex: none;
    width: 65px;
    height: 30px;
    margin: 0 0 10px -3px;
    background: url("data:image/svg+xml,%3Csvg xmlns='http://www.w3.org/2000/svg' width='65' height='30'%3E%3Cpath d='M1 1H50Q53 1 54 3L64 29H13Q10 29 9 27z' fill='%23ccc' stroke='%23999'/%3E%3C/svg%3E") no-repeat;
}

.profile {
    flex: none;
    width: 30px;
    height: 30px;
    margin: 0 0 20px 21px;
}

.addressbar {
    display: flex;
    align-items: center;
    flex: none;
    height: 64px;
    padding: 10px 0 0 22px;
    background: #f2f2f2;
}

.nav-icon {
    flex: none;
}

.nav-back { width: 28px; height: 26px; }
.nav-forward { width: 28px; height: 26px; margin-left: 28px; }
.nav-reload { width: 28px; height: 28px; margin-left: 29px; }
.nav-home { width: 26px; height: 28px; margin-left: 28px; }

.omnibox {
    display: flex;
    align-items: center;
    flex: none;
    width: 2155px;
    height: 54px;
    margin-left: 24px;
    padding: 0 12px 0 18px;
    border: 2px solid #c4c4c4;
    border-radius: 5px;
    background: #fff;
    font-size: 28.500px;
}

.lock {
    width: 18px;
    height: 22px;
}

.secure {
    padding: 0 13px 0 14px;
    border-right: 1px solid #bbb;
    font-size: 29.500px;
    line-height: 34px;
    color: #188048;
}

.url {
    margin-left: 12px;
    color: #000;
}

.url-https { color: #0b8043; }
.url-dim { color: #808080; }

.star {
    width: 30px;
    height: 28px;
    margin-left: auto;
}

.extensions {
    display: flex;
    align-items: center;
    flex: none;
    margin-left: 21px;
}

.ext-rr {
    display: flex;
    align-items: center;
    justify-content: center;
    width: 32px;
    height: 36px;
    font-size: 8px;
    text-align: center;
    color: #bbb;
    background: #eee;
}

.ext-json {
    display: flex;
    align-items: center;
    justify-content: center;
    width: 32px;
    height: 32px;
    margin-left: 25px;
    border: 2px solid #bbb;
    border-radius: 50%;
    font-size: 12px;
    color: #888;
    background: #fff;
}

.ext-up {
    flex: none;
    width: 32px;
    height: 32px;
    margin-left: 24px;
}

.bookmarks {
    display: flex;
    align-items: center;
    flex: none;
    gap: 26px;
    height: 57px;
    padding: 0 0 0 27px;
    border-bottom: 1px solid #d0d0d0;
    background: #f2f2f2;
    font-size: 25.600px;
    white-space: nowrap;
    color: #000;
}

.bookmark {
    display: flex;
    align-items: center;
    gap: 8px;
}

/* nudges so each bookmark lands where chrome put it */
.bookmark:nth-child(2) { margin-left: -3px; }
.bookmark:nth-child(3) { margin-left: 1px; }
.bookmark:nth-child(4) { margin-left: -2px; }
.bookmark:nth-child(5) { margin-left: 6px; }
.bookmark:nth-child(6) { margin-left: 4px; }
.bookmark:nth-child(7) { margin-left: -2px; }
.bookmark:nth-child(8) { margin-left: 8px; }
.bookmark:nth-child(9) { margin-left: 1px; }

.bm-icon {
    flex: none;
    width: 32px;
    height: 32px;
}

.bm-grid {
    width: 27px;
    height: 21px;
    margin-right: 3px;
}

.bm-more {
    margin-left: auto;
    font-size: 28px;
    color: #555;
}

/* wireframe.cc toolbar */
.toolbar {
    position: relative;
    z-index: 3;
    display: flex;
    align-items: center;
    flex: none;
    height: 90px;
    background: #424242;
    box-shadow: 0 4px 10px rgba(0, 0, 0, .25);
}

.tb-logo {
    display: flex;
    align-items: center;
    align-self: flex-start;
    flex: none;
    gap: 14px;
    width: 120px;
    height: 84px;
    padding-left: 38px;
    border-right: 2px solid #222;
}

.logo-icon {
    width: 48px;
    height: 38px;
    margin-top: 4px;
}

.logo-caret {
    width: 0;
    height: 0;
    border-left: 7px solid #808080;
    border-top: 8px solid transparent;
    border-bottom: 8px solid transparent;
    margin-top: 6px;
}

.tb-brand {
    display: flex;
    align-items: center;
    justify-content: center;
    flex: none;
    width: 362px;
    height: 90px;
    border-right: 2px solid #222;
    font-size: 36px;
    font-weight: 700;
    color: #fff;
}

.brand-bar {
    width: 4px;
    height: 29px;
    margin: 4px 6px 0 3px;
    background: #ff6650;
}

.btn-group {
    display: flex;
    flex: none;
    margin-left: 20px;
    border-radius: 10px;
    background: #555;
    box-shadow: inset 0 2px 0 #6b6b6b, 0 2px 0 #1f1f1f, 0 5px 0 #363636, 0 0 0 3px #3a3a3a;
}

.btn-group-history {
    margin-left: 18px;
}

.btn {
    display: flex;
    align-items: center;
    justify-content: center;
    flex: none;
    width: 71.300px;
    height: 59px;
    border: 0;
    background: none;
}

.btn + .btn {
    border-left: 2px solid #333;
}

.btn svg {
    width: 32px;
    height: 32px;
}

.tb-right {
    display: flex;
    align-items: center;
    margin-left: auto;
}

.tb-right .btn {
    border: 0;
    border-radius: 10px;
    box-shadow: inset 0 2px 0 #6b6b6b, 0 2px 0 #1f1f1f, 0 5px 0 #363636, 0 0 0 3px #3a3a3a;
}

.btn-single {
    width: 70px;
    background: #555;
}

.btn.btn-save {
    gap: 9px;
    width: 144px;
    margin: 0 26px 0 20px;
    font-family: Roboto, sans-serif;
    font-size: 28px;
    font-weight: 700;
    color: #fff1ee;
    text-shadow: 0 2px 1px rgba(150, 50, 30, .7);
    background: #ff6650;
    box-shadow: inset 0 2px 0 #ffa090, 0 2px 0 #1f1f1f, 0 5px 0 #363636, 0 0 0 3px #3a3a3a;
}

.btn.btn-save svg {
    width: 22px;
    height: 25px;
}

.hamburger {
    display: flex;
    flex-direction: column;
    gap: 5px;
    width: 24px;
    margin-left: 32px;
}

.hamburger span {
    height: 4px;
    background: #999;
}

.signup {
    width: 121px;
    margin-left: 37px;
    white-space: nowrap;
    font-size: 34px;
    font-weight: 700;
    color: #aaa;
}

/* drawing area */
.workspace {
    position: relative;
    flex: 1;
    background: #eee;
}

.gridsheet {
    width: 2048px;
    height: 1195px;
    margin-left: 268px;
    border-left: 2px solid #ccc;
    border-right: 2px solid #ccc;
    border-bottom: 2px solid #ccc;
    padding: 48px 0 0 184px;
    background-color: #fff;
    background-image:
        linear-gradient(#e6e6e6 3px, transparent 3px),
        linear-gradient(90deg, #e6e6e6 3px, transparent 3px),
        linear-gradient(#ededed 2px, transparent 2px),
        linear-gradient(90deg, #ededed 2px, transparent 2px);
    background-size: 200px 200px, 200px 200px, 40px 40px, 40px 40px;
    background-position: -1px -4px;
}

.artboard {
    width: 1642px;
    height: 1098px;
    padding: 264px 0 0 369px;
    border: 2px solid #444;
    background: #fff;
}

.rounded-box {
    display: flex;
    flex-direction: column;
    justify-content: center;
    width: 944px;
    height: 568px;
    padding-right: 8px;
    border: 2px solid #444;
    border-radius: 30px;
    font-family: "Liberation Sans", Arial, sans-serif;
    font-size: 84.500px;
    font-weight: 700;
    line-height: 200px;
    text-align: center;
    color: #444;
}

/* white haze the dock leaves on the page */
.dock-glow {
    position: absolute;
    left: 620px;
    bottom: -40px;
    width: 1310px;
    height: 90px;
    border-radius: 50%;
    background: rgba(255, 255, 255, .9);
    filter: blur(30px);
}

.statusbar {
    position: absolute;
    top: 1486px;
    left: 1752px;
    right: 0;
    display: flex;
    gap: 5px;
    height: 34px;
    font-size: 24px;
    line-height: 38px;
    white-space: nowrap;
    color: #666;
}

.status-part {
    background: rgba(255, 255, 255, .55);
}

.status-canvas {
    width: 269px;
    padding-left: 25px;
}

.status-coords {
    display: flex;
    flex: 1;
    padding-left: 12px;
}

.st-x { width: 131px; }
.st-y { width: 144px; }
.st-w { width: 130px; }

/* dock */
.dock {
    position: absolute;
    left: 665px;
    bottom: 0;
    display: flex;
    gap: 8px;
    width: 1231px;
    height: 70px;
    padding: 10px 0 0 8px;
    border-radius: 10px 10px 0 0;
    background: linear-gradient(90deg, #8c909c, #9d9ea9 50%, #a9a9b4);
}

.dock-item {
    position: relative;
    flex: none;
    width: 44px;
    height: 44px;
}

.dock-item svg {
    display: block;
    width: 44px;
    height: 44px;
}

.dock-item svg svg {
    width: auto;
    height: auto;
}

.dock-help {
    font-family: "Liberation Sans", sans-serif;
    font-size: 52px;
    line-height: 44px;
    text-align: center;
    color: #c4c6cb;
    -webkit-text-stroke: .8px #666a72;
    transform: scaleX(.8);
}

.dock-item.on::after {
    content: "";
    position: absolute;
    left: 20px;
    top: 51px;
    width: 5px;
    height: 5px;
    border-radius: 50%;
    background: #111;
}

.dock-sep {
    flex: none;
    width: 1px;
    height: 52px;
    margin: 0 7px;
    background: #666a74;
}
```
